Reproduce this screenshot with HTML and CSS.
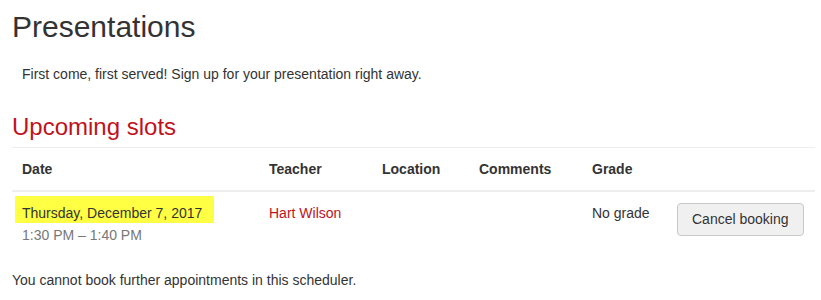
FILE: index.html
```html
<!DOCTYPE html>
<html lang="en">
<head>
<meta charset="utf-8">
<title>Presentations</title>
<link rel="stylesheet" href="styles.css">
</head>
<body>
<div class="page">
  <h2 class="title">Presentations</h2>
  <p class="intro">First come, first served! Sign up for your presentation right away.</p>
  <h3 class="section">Upcoming slots</h3>
  <table class="slots">
    <thead>
      <tr>
        <th class="c-date">Date</th>
        <th class="c-teacher">Teacher</th>
        <th class="c-loc">Location</th>
        <th class="c-comm">Comments</th>
        <th class="c-grade">Grade</th>
        <th class="c-act"></th>
      </tr>
    </thead>
    <tbody>
      <tr>
        <td class="c-date">
          <span class="day">Thursday, December 7, 2017</span>
          <div class="time">1:30 PM – 1:40 PM</div>
        </td>
        <td class="c-teacher"><a class="teacher" href="#">Hart Wilson</a></td>
        <td class="c-loc"></td>
        <td class="c-comm"></td>
        <td class="c-grade">No grade</td>
        <td class="c-act"><button class="btn" type="button">Cancel booking</button></td>
      </tr>
    </tbody>
  </table>
  <p class="note">You cannot book further appointments in this scheduler.</p>
</div>
</body>
</html>
```

FILE: styles.css
```css
html, body {
  margin: 0;
  padding: 0;
  background: #fff;
}

body {
  font-family: "Liberation Sans", Arial, sans-serif;
  font-size: 14px;
  line-height: 20px;
  color: #333;
}

.page {
  padding: 0 6px 0 12px;
}

.title {
  margin: 10px 0 0;
  font-size: 30px;
  line-height: 33px;
  font-weight: normal;
  color: #333;
}

.intro {
  margin: 21px 0 0 10px;
}

.section {
  margin: 29px 0 0;
  font-size: 24px;
  line-height: 27px;
  font-weight: normal;
  color: #c0121c;
}

.slots {
  margin-top: 7px;
  width: 803px;
  border-collapse: collapse;
  border-top: 1px solid #eee;
}

.slots th,
.slots td {
  text-align: left;
  vertical-align: top;
  padding: 11px 10px;
}

.slots th {
  font-weight: bold;
  font-size: 14px;
  color: #333;
  border-bottom: 2px solid #eee;
}

.c-date { width: 227px; }
.c-teacher { width: 93px; }
.c-loc { width: 77px; }
.c-comm { width: 93px; }
.c-grade { width: 65px; }

.day {
  display: inline-block;
  margin: -7px -12px 0 -7px;
  padding: 7px 12px 0 7px;
  background: #ffff44;
  color: #333;
}

.time {
  margin-top: 2px;
  color: #777;
}

.teacher {
  color: #c0121c;
  text-decoration: none;
}

.btn {
  font-family: "Liberation Sans", Arial, sans-serif;
  font-size: 14px;
  line-height: 19px;
  padding: 6px 14px;
  color: #333;
  background: #f0f0f0;
  border: 1px solid #c8c8c8;
  border-radius: 4px;
}

.note {
  margin: 14px 0 0;
}
```
